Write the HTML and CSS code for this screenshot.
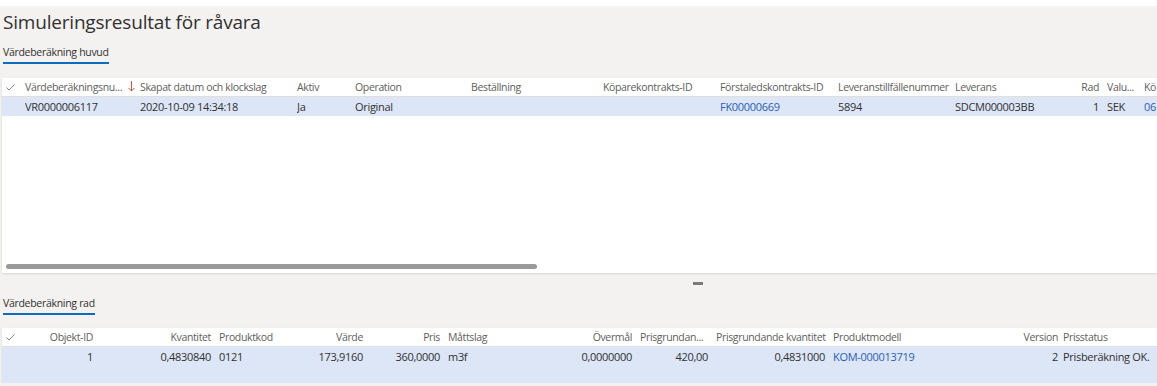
FILE: index.html
```html
<!DOCTYPE html>
<html lang="sv">
<head>
<meta charset="UTF-8" />
<title>Simuleringsresultat för råvara</title>
<link rel="stylesheet" href="styles.css">
</head>
<body>
  <div class="topstrip"></div>

  <div class="page">
    <h1 class="title">Simuleringsresultat för råvara</h1>

    <div class="tab"><span class="tab-label">Värdeberäkning huvud</span></div>

    <div class="grid grid-upper">
      <div class="grid-head cols-upper">
        <div class="cell check"><svg width="9" height="7" viewBox="0 0 9 7"><path d="M0.5 3.5 L3 6 L8.5 0.5" fill="none" stroke="#8a8886" stroke-width="1"/></svg></div>
        <div class="cell sortcol"><span class="clip">Värdeberäkningsnu...</span><svg class="sort" width="7" height="11" viewBox="0 0 7 11"><path d="M3.5 0 V10 M0.5 7 L3.5 10 L6.5 7" fill="none" stroke="#c4553f" stroke-width="1"/></svg></div>
        <div class="cell">Skapat datum och klockslag</div>
        <div class="cell">Aktiv</div>
        <div class="cell">Operation</div>
        <div class="cell">Beställning</div>
        <div class="cell">Köparekontrakts-ID</div>
        <div class="cell">Förstaledskontrakts-ID</div>
        <div class="cell">Leveranstillfällenummer</div>
        <div class="cell">Leverans</div>
        <div class="cell num">Rad</div>
        <div class="cell">Valu...</div>
        <div class="cell">Kö</div>
      </div>
      <div class="grid-row cols-upper selected">
        <div class="cell check"></div>
        <div class="cell">VR0000006117</div>
        <div class="cell">2020-10-09 14:34:18</div>
        <div class="cell">Ja</div>
        <div class="cell">Original</div>
        <div class="cell"></div>
        <div class="cell"></div>
        <div class="cell link">FK00000669</div>
        <div class="cell">5894</div>
        <div class="cell">SDCM000003BB</div>
        <div class="cell num">1</div>
        <div class="cell">SEK</div>
        <div class="cell link">06</div>
      </div>
      <div class="hscroll"></div>
    </div>

    <div class="splitter"><div class="splitter-handle"></div></div>

    <div class="tab tab-lower"><span class="tab-label">Värdeberäkning rad</span></div>

    <div class="grid grid-lower">
      <div class="grid-head cols-lower">
        <div class="cell check"><svg width="9" height="7" viewBox="0 0 9 7"><path d="M0.5 3.5 L3 6 L8.5 0.5" fill="none" stroke="#8a8886" stroke-width="1"/></svg></div>
        <div class="cell num">Objekt-ID</div>
        <div class="cell num">Kvantitet</div>
        <div class="cell">Produktkod</div>
        <div class="cell num">Värde</div>
        <div class="cell num">Pris</div>
        <div class="cell">Måttslag</div>
        <div class="cell num">Övermål</div>
        <div class="cell">Prisgrundan...</div>
        <div class="cell num">Prisgrundande kvantitet</div>
        <div class="cell">Produktmodell</div>
        <div class="cell num tight">Version</div>
        <div class="cell">Prisstatus</div>
      </div>
      <div class="grid-row cols-lower selected tall">
        <div class="cell check"></div>
        <div class="cell num">1</div>
        <div class="cell num">0,4830840</div>
        <div class="cell">0121</div>
        <div class="cell num">173,9160</div>
        <div class="cell num">360,0000</div>
        <div class="cell">m3f</div>
        <div class="cell num">0,0000000</div>
        <div class="cell num">420,00</div>
        <div class="cell num">0,4831000</div>
        <div class="cell link">KOM-000013719</div>
        <div class="cell num tight">2</div>
        <div class="cell">Prisberäkning OK.</div>
      </div>
    </div>
  </div>
</body>
</html>
```

FILE: styles.css
```css
body {
  margin: 0;
  background-color: #f3f2f1;
  font-family: "Open Sans", "Noto Sans", sans-serif;
  color: #323130;
  overflow: hidden;
}

.topstrip {
  height: 6px;
  background: #ffffff;
}

.page {
  padding-left: 2px;
}

.title {
  margin: 0;
  padding: 2px 0 0 1px;
  font-size: 19px;
  font-weight: 400;
  line-height: 28px;
  letter-spacing: -0.2px;
}

.tab {
  display: flex;
  padding: 8px 0 0 1px;
}

.tab-label {
  font-size: 10.5px;
  line-height: 16px;
  padding-bottom: 2px;
  border-bottom: 2px solid #0f6cbd;
  letter-spacing: -0.3px;
}

.tab-lower {
  padding-top: 2px;
}

/* grids */
.grid {
  background: #ffffff;
  box-shadow: 0 1px 2px rgba(0,0,0,0.12);
  overflow: hidden;
}

.grid-upper {
  margin-top: 14px;
  height: 195px;
  position: relative;
}

.grid-lower {
  margin-top: 13px;
}

.cols-upper {
  display: grid;
  grid-template-columns: 23px 115px 157px 58px 116px 132px 117px 118px 117px 115px 37px 37px 100px;
}

.cols-lower {
  display: grid;
  grid-template-columns: 23px 76px 118px 71px 81px 77px 112px 80px 76px 117px 167px 63px 100px;
}

.grid-head {
  height: 18px;
  border-bottom: 1px solid #e1dfdd;
  font-size: 10.5px;
  color: #605e5c;
}

.grid-head .cell {
  letter-spacing: -0.35px;
}

.grid-row {
  height: 19px;
  font-size: 11px;
}

.grid-row.tall {
  height: 36px;
}

.selected {
  background-color: #dce6f7;
}

.cell {
  white-space: nowrap;
  overflow: hidden;
  line-height: 18px;
  letter-spacing: -0.3px;
}

.grid-row .cell {
  line-height: 19px;
}

.cell.num {
  text-align: right;
  padding-right: 8px;
}

.cell.tight {
  padding-right: 5px;
}

.cell.check {
  display: flex;
  justify-content: center;
  align-items: center;
  padding-right: 6px;
}

.grid-row .cell.check {
  display: block;
}

.sortcol {
  display: flex;
  align-items: center;
}

.sort {
  flex: none;
  margin: 0 0 1px 6px;
}

.link {
  color: #2b5eb3;
}

.hscroll {
  position: absolute;
  left: 4px;
  bottom: 4px;
  width: 531px;
  height: 5px;
  border-radius: 3px;
  background: #9a9a9a;
}

.splitter {
  height: 20px;
  display: flex;
  justify-content: center;
  align-items: center;
  padding-left: 237px;
}

.splitter-handle {
  width: 10px;
  height: 3px;
  background: #7a7a7a;
}
```
